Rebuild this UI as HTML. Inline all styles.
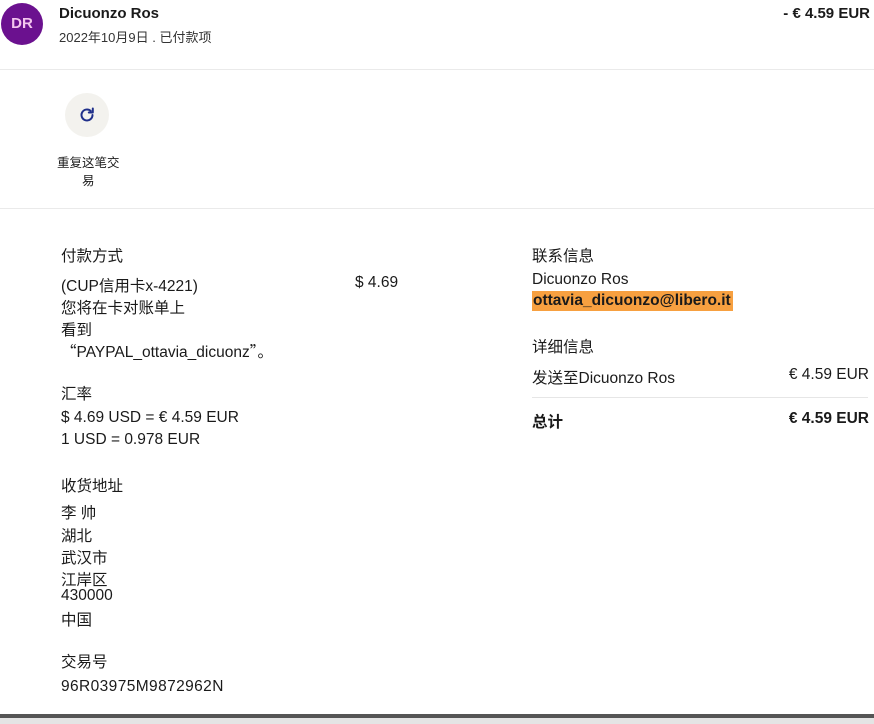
<!DOCTYPE html>
<html><head><meta charset="utf-8"><style>
*{margin:0;padding:0;box-sizing:border-box}
body{width:874px;height:724px;background:#fff;position:relative;overflow:hidden;font-family:"Liberation Sans","Noto Sans CJK SC",sans-serif;color:#1a1a1a;font-size:15.5px}
.a{position:absolute;white-space:nowrap}
.b{font-weight:bold}
.hr{position:absolute;left:0;width:874px;height:1px;background:#eaeaea}
.q{font-family:"Noto Sans CJK SC",sans-serif}
</style></head><body>
<div class="a" style="left:1px;top:3px;width:42px;height:42px;border-radius:50%;background:#6b118f;color:#f3c6ee;font-weight:bold;font-size:15px;text-align:center;line-height:42px">DR</div>
<div class="a b" style="left:59px;top:5px;font-size:15px">Dicuonzo Ros</div>
<div class="a" style="left:59px;top:27px;font-size:13px;color:#333">2022年10月9日 . 已付款项</div>
<div class="a b" style="right:4px;top:5px;font-size:15px">- € 4.59 EUR</div>
<div class="hr" style="top:69px"></div>
<div class="a" style="left:65px;top:93px;width:44px;height:44px;border-radius:50%;background:#f3f2ee"></div>
<svg class="a" style="left:77px;top:105px" width="20" height="20" viewBox="0 0 20 20"><path d="M15.5 10a5.5 5.5 0 1 1-1.8-4.1" fill="none" stroke="#1f2f8a" stroke-width="2" stroke-linecap="round"/><path d="M15.8 3.5v4h-4" fill="none" stroke="#1f2f8a" stroke-width="2" stroke-linecap="round" stroke-linejoin="round"/></svg>
<div class="a" style="left:57px;top:152px;font-size:12.5px">重复这笔交</div>
<div class="a" style="left:82px;top:170px;font-size:12.5px">易</div>
<div class="hr" style="top:208px"></div>
<div class="a" style="left:61px;top:244px">付款方式</div>
<div class="a" style="left:61px;top:274px">(CUP信用卡x-4221)</div>
<div class="a" style="left:355px;top:274px">$ 4.69</div>
<div class="a" style="left:61px;top:296px">您将在卡对账单上</div>
<div class="a" style="left:61px;top:318px">看到</div>
<div class="a" style="left:61px;top:340px"><span class="q">“</span>PAYPAL_ottavia_dicuonz<span class="q">”</span>。</div>
<div class="a" style="left:61px;top:382px">汇率</div>
<div class="a" style="left:61px;top:409px">$ 4.69 USD = € 4.59 EUR</div>
<div class="a" style="left:61px;top:431px">1 USD = 0.978 EUR</div>
<div class="a" style="left:61px;top:474px">收货地址</div>
<div class="a" style="left:61px;top:501px">李 帅</div>
<div class="a" style="left:61px;top:524px">湖北</div>
<div class="a" style="left:61px;top:546px">武汉市</div>
<div class="a" style="left:61px;top:568px">江岸区</div>
<div class="a" style="left:61px;top:587px">430000</div>
<div class="a" style="left:61px;top:608px">中国</div>
<div class="a" style="left:61px;top:650px">交易号</div>
<div class="a" style="left:61px;top:678px;letter-spacing:0.4px">96R03975M9872962N</div>
<div class="a" style="left:532px;top:244px">联系信息</div>
<div class="a" style="left:532px;top:271px">Dicuonzo Ros</div>
<div class="a b" style="left:532px;top:291px;background:#f7a040;padding:0 2px 0 1px;line-height:20px">ottavia_dicuonzo@libero.it</div>
<div class="a" style="left:532px;top:335px">详细信息</div>
<div class="a" style="left:532px;top:366px">发送至Dicuonzo Ros</div>
<div class="a" style="right:5px;top:366px">€ 4.59 EUR</div>
<div class="a" style="left:532px;top:397px;width:336px;height:1px;background:#e6e6e6"></div>
<div class="a b" style="left:532px;top:410px">总计</div>
<div class="a b" style="right:5px;top:410px">€ 4.59 EUR</div>
<div class="a" style="left:0;top:714px;width:874px;height:4px;background:#555"></div>
<div class="a" style="left:0;top:718px;width:874px;height:6px;background:#e4e4e4"></div>
</body></html>
